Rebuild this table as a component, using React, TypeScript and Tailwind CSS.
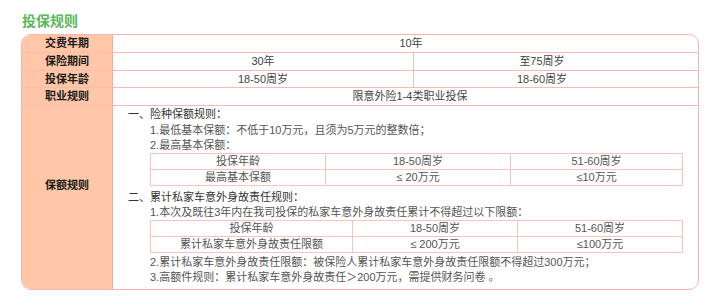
import React from 'react';

const font = { fontFamily: '"Liberation Sans", "Noto Sans CJK SC", sans-serif' };

const Row = ({ label, h, children }: { label: string; h: string; children: React.ReactNode }) => (
  <div className={`flex ${h} border-b border-[#f9bab2]`}>
    <div className="w-[91px] shrink-0 bg-[#ffc6a8] border-r border-[#f6a89d] flex items-center justify-center font-bold text-[11px] text-[#1a1a1a]">
      {label}
    </div>
    <div className="flex-1 flex text-[11px] text-[#444]">{children}</div>
  </div>
);

const SubTable = ({ widths, rows }: { widths: string[]; rows: string[][] }) => (
  <div className="ml-[22px] w-[533px] border-t border-l border-[#f9c4be]">
    {rows.map((r, i) => (
      <div key={i} className="flex h-[16px] border-b border-[#f9c4be]">
        {r.map((c, j) => (
          <div key={j} className={`${widths[j]} border-r border-[#f9c4be] flex items-center justify-center`}>
            {c}
          </div>
        ))}
      </div>
    ))}
  </div>
);

export default function App() {
  return (
    <div className="bg-white w-[720px] h-[304px] px-[21px] pt-[12px]" style={font}>
      <h2 className="text-[14px] leading-[19px] font-bold text-[#5cb85c] pl-px">投保规则</h2>
      <div className="mt-[3px] w-[678px] border border-[#f9b5ac] rounded-[10px] overflow-hidden">
        <Row label="交费年期" h="h-[18px]">
          <div className="flex-1 flex items-center justify-center pl-[11px]">10年</div>
        </Row>
        <Row label="保险期间" h="h-[18px]">
          <div className="w-[301px] border-r border-[#f9bab2] flex items-center justify-center">30年</div>
          <div className="flex-1 flex items-center justify-center pr-[28px]">至75周岁</div>
        </Row>
        <Row label="投保年龄" h="h-[17px]">
          <div className="w-[301px] border-r border-[#f9bab2] flex items-center justify-center">18-50周岁</div>
          <div className="flex-1 flex items-center justify-center pr-[28px]">18-60周岁</div>
        </Row>
        <Row label="职业规则" h="h-[18px]">
          <div className="flex-1 flex items-center justify-center pl-[9px]">限意外险1-4类职业投保</div>
        </Row>
        <div className="flex h-[183px]">
          <div className="w-[91px] shrink-0 bg-[#ffc6a8] border-r border-[#f6a89d] flex items-center justify-center pb-[24px] font-bold text-[11px] text-[#1a1a1a]">
            保额规则
          </div>
          <div className="flex-1 pl-[15px] text-[11px] text-[#555]">
            <div className="h-[16px] leading-[16px] mb-[1px] text-[#333]">一、险种保额规则：</div>
            <div className="ml-[22px] h-[15px] leading-[15px]">1.最低基本保额：不低于10万元，且须为5万元的整数倍；</div>
            <div className="ml-[22px] h-[15px] leading-[15px]">2.最高基本保额：</div>
            <SubTable
              widths={['w-[175px]', 'w-[185px]', 'flex-1']}
              rows={[
                ['投保年龄', '18-50周岁', '51-60周岁'],
                ['最高基本保额', '≤ 20万元', '≤10万元'],
              ]}
            />
            <div className="mt-[3px] h-[16px] leading-[16px] text-[#333]">二、累计私家车意外身故责任规则：</div>
            <div className="ml-[22px] h-[15px] leading-[15px]">1.本次及既往3年内在我司投保的私家车意外身故责任累计不得超过以下限额：</div>
            <SubTable
              widths={['w-[202px]', 'w-[165px]', 'flex-1']}
              rows={[
                ['投保年龄', '18-50周岁', '51-60周岁'],
                ['累计私家车意外身故责任限额', '≤ 200万元', '≤100万元'],
              ]}
            />
            <div className="ml-[22px] mt-[2px] h-[15px] leading-[15px]">2.累计私家车意外身故责任限额：被保险人累计私家车意外身故责任限额不得超过300万元；</div>
            <div className="ml-[22px] h-[15px] leading-[15px]">3.高额件规则：累计私家车意外身故责任＞200万元，需提供财务问卷 。</div>
          </div>
        </div>
      </div>
    </div>
  );
}
